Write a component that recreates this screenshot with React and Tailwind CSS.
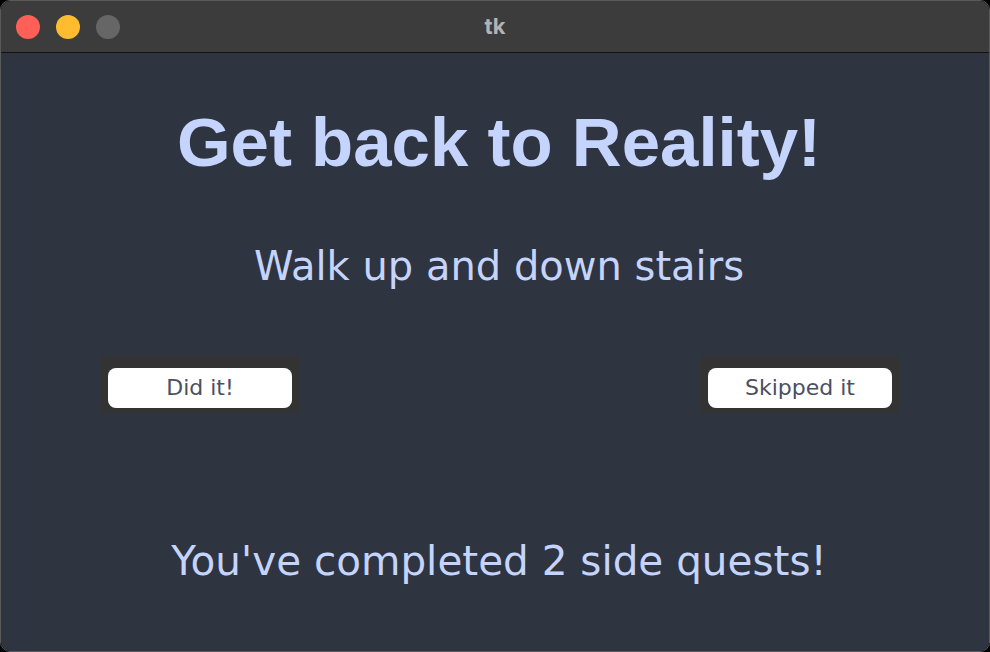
import React from 'react';

const comic = { fontFamily: '"Comic Sans MS", "DejaVu Sans", sans-serif' };

const QuestButton = ({ label }) => (
    <div className="w-[200px] h-[57px] bg-[#333333] pt-[12px] px-[8px]">
        <button
            className="w-full h-[40px] bg-white rounded-[8px] text-[22px] leading-[40px] text-[#4a4f62]"
            style={comic}
        >
            {label}
        </button>
    </div>
);

const App = () => {
    return (
        <div className="w-[990px] h-[652px] bg-black overflow-hidden">
            <div className="w-[990px] h-[652px] rounded-[10px] overflow-hidden border border-[#5a5a5a] flex flex-col">
                {/* title bar */}
                <div className="h-[52px] shrink-0 bg-[#3c3c3c] border-b border-[#111] flex items-center relative">
                    <div className="flex items-center gap-[16px] pl-[15px]">
                        <span className="w-[24px] h-[24px] rounded-full bg-[#fe5f57]"></span>
                        <span className="w-[24px] h-[24px] rounded-full bg-[#febc2e]"></span>
                        <span className="w-[24px] h-[24px] rounded-full bg-[#666666]"></span>
                    </div>
                    <span className="absolute left-0 right-0 text-center text-[22px] font-bold text-[#b3b3b3] font-['Inter',sans-serif] pointer-events-none">
                        tk
                    </span>
                </div>

                {/* body */}
                <div className="flex-1 bg-[#2e3440] flex flex-col items-center text-[#c5d4fc]">
                    <h1 className="mt-[50px] ml-[8px] text-[69px] leading-[80px] font-bold font-['Liberation_Sans',Arial,sans-serif]">
                        Get back to Reality!
                    </h1>
                    <p className="mt-[53px] ml-[8px] text-[40px] leading-[60px]" style={comic}>
                        Walk up and down stairs
                    </p>
                    <div className="mt-[60px] w-full flex justify-between pl-[99px] pr-[89px]">
                        <QuestButton label="Did it!" />
                        <QuestButton label="Skipped it" />
                    </div>
                    <p className="mt-[118px] ml-[8px] text-[40.5px] leading-[60px]" style={comic}>
                        You've completed 2 side quests!
                    </p>
                </div>
            </div>
        </div>
    );
};

export default App;
